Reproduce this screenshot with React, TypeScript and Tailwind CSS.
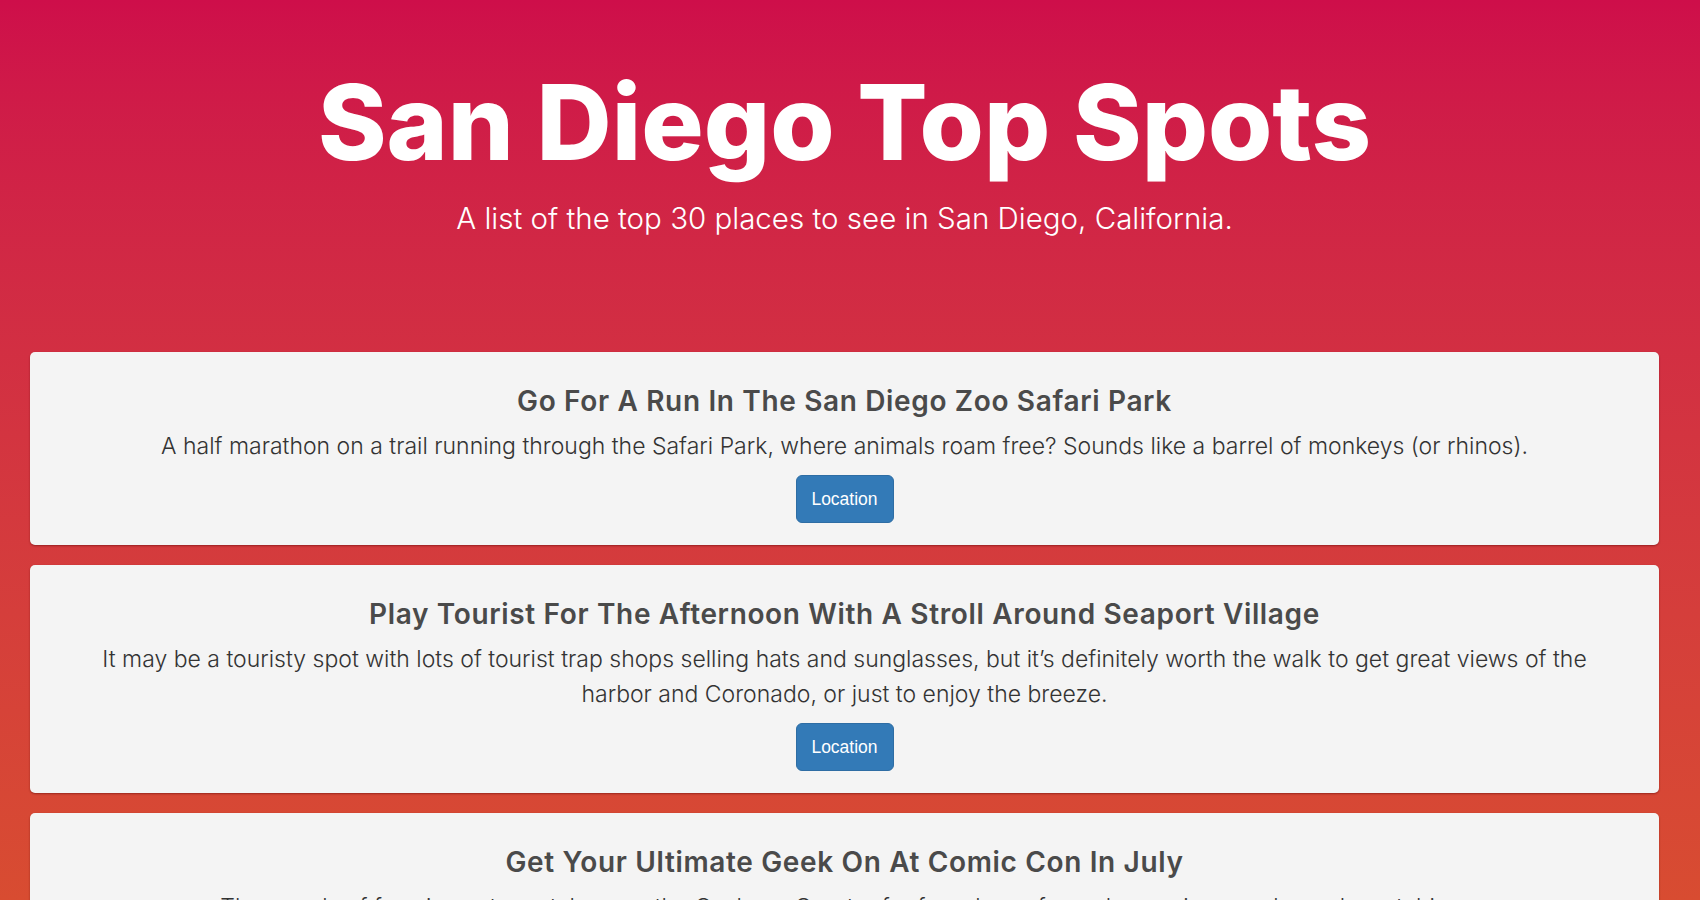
const spots = [
  {
    title: "Go For A Run In The San Diego Zoo Safari Park",
    description:
      "A half marathon on a trail running through the Safari Park, where animals roam free? Sounds like a barrel of monkeys (or rhinos).",
  },
  {
    title: "Play Tourist For The Afternoon With A Stroll Around Seaport Village",
    description:
      "It may be a touristy spot with lots of tourist trap shops selling hats and sunglasses, but it’s definitely worth the walk to get great views of the harbor and Coronado, or just to enjoy the breeze.",
  },
  {
    title: "Get Your Ultimate Geek On At Comic Con In July",
    description:
      "Thousands of fans in costume take over the Gaslamp Quarter for four days of panels, previews and people watching.",
  },
]

function SpotCard({ title, description }: { title: string; description: string }) {
  return (
    <div className="bg-[#f4f4f4] rounded-[5px] shadow-[0_1px_2px_rgba(80,0,0,0.45)] pt-[33px] pb-[22px] px-[40px] text-center">
      <h3 className="font-['Inter',sans-serif] font-semibold text-[28px] leading-[32px] tracking-[0.65px] text-[#4a4a4a]">
        {title}
      </h3>
      <p className="mt-[12px] font-['Inter',sans-serif] font-light text-[23px] leading-[35px] text-[#333]">
        {description}
      </p>
      <button className="mt-[11px] h-[48px] w-[98px] rounded-[6px] border border-[#2e6da4] bg-[#337ab7] font-['Liberation_Sans',Arial,sans-serif] text-[17.5px] text-white">
        Location
      </button>
    </div>
  )
}

export default function App() {
  return (
    <div className="min-h-screen bg-gradient-to-b from-[#ce0e4a] to-[#d84c31] bg-fixed pl-[30px] pr-[41px] pb-10">
      {/* Header */}
      <header className="pt-[70px] pb-[116px] text-center text-white">
        <h1 className="font-['Inter',sans-serif] font-extrabold text-[104px] leading-[104px]">San Diego Top Spots</h1>
        <p className="mt-[26px] font-['Inter',sans-serif] font-light text-[29.5px] leading-[36px]">
          A list of the top 30 places to see in San Diego, California.
        </p>
      </header>

      {/* Spots */}
      <div className="flex flex-col gap-[20px]">
        {spots.map((spot, index) => (
          <SpotCard key={index} title={spot.title} description={spot.description} />
        ))}
      </div>
    </div>
  )
}
